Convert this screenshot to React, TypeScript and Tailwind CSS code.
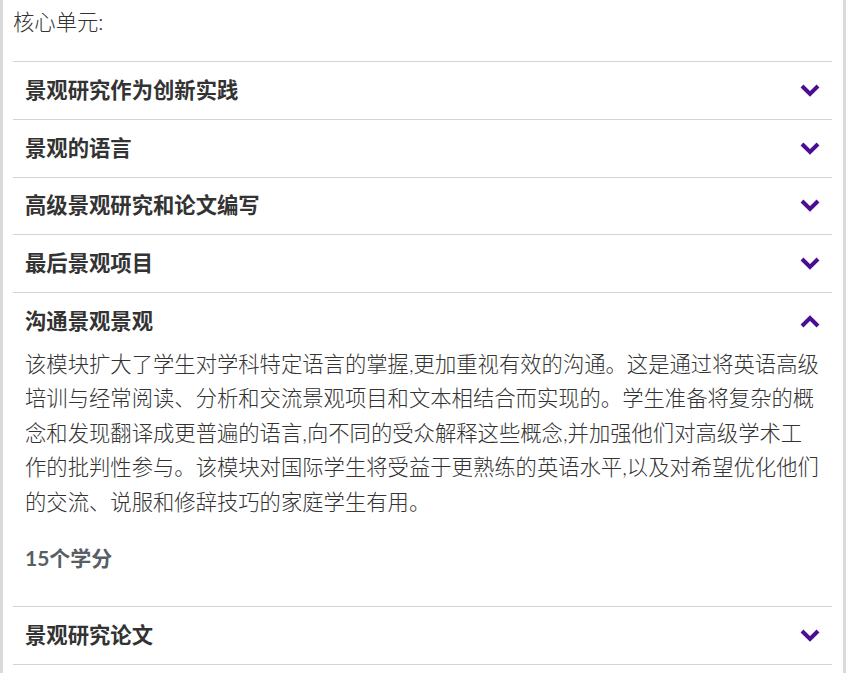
import { useState } from 'react'

const units = [
  { title: '景观研究作为创新实践' },
  { title: '景观的语言' },
  { title: '高级景观研究和论文编写' },
  { title: '最后景观项目' },
  {
    title: '沟通景观景观',
    body: '该模块扩大了学生对学科特定语言的掌握,更加重视有效的沟通。这是通过将英语高级培训与经常阅读、分析和交流景观项目和文本相结合而实现的。学生准备将复杂的概念和发现翻译成更普遍的语言,向不同的受众解释这些概念,并加强他们对高级学术工作的批判性参与。该模块对国际学生将受益于更熟练的英语水平,以及对希望优化他们的交流、说服和修辞技巧的家庭学生有用。',
    credits: '15个学分',
  },
  { title: '景观研究论文' },
]

function Chevron({ up }: { up?: boolean }) {
  return (
    <svg width="20" height="13" viewBox="0 0 20 13" className="shrink-0">
      <polyline
        points={up ? '2,11 10,3 18,11' : '2,2 10,10 18,2'}
        fill="none"
        stroke="#4b0e92"
        strokeWidth="4"
        strokeLinejoin="miter"
      />
    </svg>
  )
}

export default function App() {
  const [open, setOpen] = useState<number | null>(4)

  return (
    <div
      className="min-h-[673px] border-x-[3px] border-[#dadada] bg-white pl-[10px] pr-[11px] pt-[5px]"
      style={{ fontFamily: 'Lato, "Noto Sans CJK SC", sans-serif' }}
    >
      <p className="mb-[21.5px] text-[21.33px] font-light leading-[34.5px] text-[#333]">核心单元:</p>

      <div className="border-b border-[#d3d3d3]">
        {units.map((unit, i) => {
          const isOpen = open === i
          return (
            <div key={unit.title} className="border-t border-[#d3d3d3]">
              <button
                onClick={() => setOpen(isOpen ? null : i)}
                className="flex h-[56.75px] w-full items-center justify-between px-[12px] text-left"
              >
                <span className="text-[21.33px] font-bold leading-[25px] text-[#333]">{unit.title}</span>
                <Chevron up={isOpen} />
              </button>
              {isOpen && unit.body && (
                <div className="-mt-[3px] px-[12px] pb-[33px]">
                  <p className="text-[21.33px] font-light leading-[34.5px] text-[#333]">{unit.body}</p>
                  <p className="mt-[24px] text-[21px] font-bold leading-[30px] text-[#575e66]">{unit.credits}</p>
                </div>
              )}
            </div>
          )
        })}
      </div>
    </div>
  )
}
